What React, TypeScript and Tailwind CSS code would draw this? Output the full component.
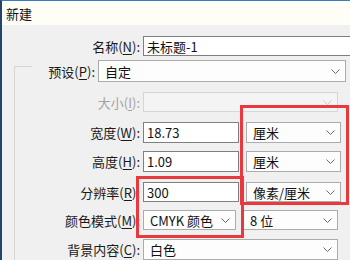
import React from "react"

const Chevron = ({ faded = false }: { faded?: boolean }) => (
  <svg width="9" height="5" viewBox="0 0 9 5" className="shrink-0" aria-hidden>
    <path d="M0.5 0.5 L4.5 4.5 L8.5 0.5" fill="none" stroke={faded ? "#c8c8c8" : "#6a6a6a"} strokeWidth="1" />
  </svg>
)

function Label({ width, children, disabled = false }: { width: string; children: React.ReactNode; disabled?: boolean }) {
  return (
    <span className={`${width} shrink-0 text-right whitespace-nowrap ${disabled ? "text-[#a3a3a3]" : "text-[#1a1a1a]"}`}>
      {children}
    </span>
  )
}

function TextBox({ width, value }: { width: string; value: string }) {
  return (
    <div className={`${width} h-full shrink-0 flex items-center border border-[#7f7f7f] bg-white pl-[3px] text-[#111]`}>
      {value}
    </div>
  )
}

function Select({ width, value, disabled = false }: { width: string; value?: string; disabled?: boolean }) {
  return (
    <div
      className={`${width} h-full shrink-0 flex items-center justify-between pl-[6px] pr-[5px] border ${
        disabled ? "border-[#d6d6d6] bg-[#f4f4f4]" : "border-[#acacac] bg-[#fdfdfd] text-[#111]"
      }`}
    >
      <span className="whitespace-nowrap">{value}</span>
      <Chevron faded={disabled} />
    </div>
  )
}

const U = ({ children }: { children: React.ReactNode }) => <span className="underline underline-offset-2">{children}</span>

export default function App() {
  return (
    <div className="relative flex h-[260px] w-[350px] flex-col overflow-hidden border-l-2 border-t border-l-[#24446c] border-t-[#3b7cc0] font-['Noto_Sans_CJK_SC',sans-serif] text-[13px] leading-none">
      <div className="flex h-[24px] shrink-0 items-center bg-[#fefdf6] pl-[4px] text-[13px] text-[#111]">新建</div>

      <div className="flex flex-1 bg-[#f0f0f0]">
        <div className="w-[30px] shrink-0">
          <div className="ml-[12px] mt-[41px] h-full w-[18px] border-l border-t border-[#d6d6d6]" />
        </div>

        <div className="flex flex-col pt-[11px]">
          <div className="flex h-[20px] items-center gap-[3px]">
            <Label width="w-[108px]">名称(<U>N</U>):</Label>
            <TextBox width="w-[210px]" value="未标题-1" />
          </div>

          <div className="mt-[4px] flex h-[22px] items-center gap-[3px]">
            <Label width="w-[63px]">预设(<U>P</U>):</Label>
            <Select width="w-[248px]" value="自定" />
          </div>

          <div className="mt-[10px] flex h-[20px] items-center gap-[3px]">
            <Label width="w-[108px]" disabled>
              大小(<U>I</U>):
            </Label>
            <Select width="w-[195px]" disabled />
          </div>

          <div className="mt-[10px] flex h-[21px] items-center gap-[3px]">
            <Label width="w-[108px]">宽度(<U>W</U>):</Label>
            <TextBox width="w-[96px]" value="18.73" />
            <div className="w-px" />
            <Select width="w-[95px]" value="厘米" />
          </div>

          <div className="mt-[8px] flex h-[21px] items-center gap-[3px]">
            <Label width="w-[108px]">高度(<U>H</U>):</Label>
            <TextBox width="w-[96px]" value="1.09" />
            <div className="w-px" />
            <Select width="w-[95px]" value="厘米" />
          </div>

          <div className="mt-[10px] flex h-[20px] items-center gap-[3px]">
            <Label width="w-[108px]">分辨率(<U>R</U>):</Label>
            <TextBox width="w-[96px]" value="300" />
            <div className="w-px" />
            <Select width="w-[95px]" value="像素/厘米" />
          </div>

          <div className="mt-[8px] flex h-[20px] items-center gap-[3px]">
            <Label width="w-[108px]">颜色模式(<U>M</U>):</Label>
            <Select width="w-[93px]" value="CMYK 颜色" />
            <div className="w-px" />
            <Select width="w-[95px]" value="8 位" />
          </div>

          <div className="mt-[9px] flex h-[21px] items-center gap-[3px]">
            <Label width="w-[108px]">背景内容(<U>C</U>):</Label>
            <Select width="w-[195px]" value="白色" />
          </div>
        </div>
      </div>

      {/* red annotation boxes drawn over the dialog */}
      <div className="pointer-events-none absolute left-[238px] top-[104px] h-[100px] w-[109px] border-[3px] border-[#e8393e]" />
      <div className="pointer-events-none absolute left-[134px] top-[175px] h-[62px] w-[108px] border-[3px] border-[#e8393e]" />
    </div>
  )
}
